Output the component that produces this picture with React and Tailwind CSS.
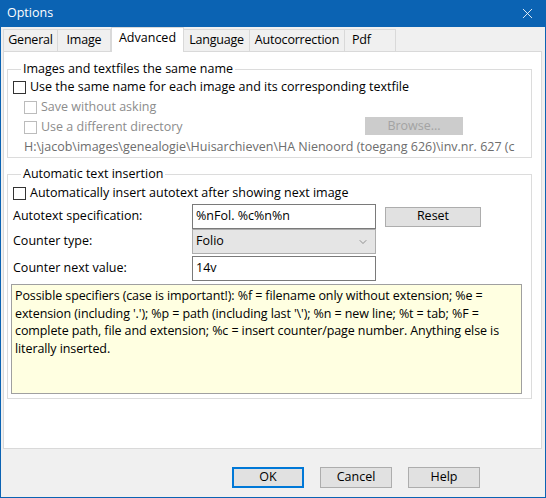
import React from 'react';
import { X, ChevronDown } from 'lucide-react';

const font = { fontFamily: '"Open Sans", "Noto Sans", "Liberation Sans", sans-serif' };

// Small win32-style checkbox
const Check = ({ label, disabled }) => (
  <div className="flex items-center h-[20px]">
    <span
      className={`w-[13px] h-[13px] border bg-white ${disabled ? 'border-[#bcbcbc]' : 'border-[#333333]'}`}
    />
    <span className={`ml-[4px] ${disabled ? 'text-[#8c8c8c]' : 'text-black'}`}>{label}</span>
  </div>
);

const tabs = [
  { name: 'General', w: 'w-[55px]' },
  { name: 'Image', w: 'w-[54px]' },
  { name: 'Advanced', w: 'w-[73px]', active: true },
  { name: 'Language', w: 'w-[67px]' },
  { name: 'Autocorrection', w: 'w-[96px]' },
  { name: 'Pdf', w: 'w-[52px]', left: true },
];

const Btn = ({ children, primary }) => (
  <button
    className={`w-[72px] h-[21px] bg-[#e1e1e1] text-black leading-none ${
      primary ? 'border-2 border-[#0078d7]' : 'border border-[#adadad]'
    }`}
  >
    {children}
  </button>
);

const helpLines = [
  'Possible specifiers (case is important!): %f = filename only without extension; %e =',
  "extension (including '.'); %p = path (including last '\\'); %n = new line; %t = tab; %F =",
  'complete path, file and extension; %c = insert counter/page number. Anything else is',
  'literally inserted.',
];

export default function App() {
  return (
    <div
      className="w-[546px] h-[498px] bg-[#0b63b3] px-[1px] pb-[1px] flex flex-col text-[12.5px] overflow-hidden"
      style={font}
    >
      {/* Title bar */}
      <div className="h-[27px] flex items-center justify-between pl-[6px] pr-[9px] text-white shrink-0">
        <span>Options</span>
        <X size={17} strokeWidth={1.2} />
      </div>

      {/* Body */}
      <div className="flex-1 bg-[#f0f0f0] flex flex-col">
        {/* Tabs */}
        <div className="flex items-end h-[24px] pl-[2px]">
          {tabs.map((t) =>
            t.active ? (
              <div
                key={t.name}
                className={`${t.w} h-[25px] -mb-[1px] bg-white border border-b-0 border-[#d9d9d9] flex items-center justify-center relative z-10 text-black`}
              >
                <span className="-mt-[3px]">{t.name}</span>
              </div>
            ) : (
              <div
                key={t.name}
                className={`${t.w} h-[22px] bg-[#f0f0f0] border border-[#d9d9d9] border-b-0 -ml-[1px] first:ml-0 flex items-center ${
                  t.left ? 'pl-[7px]' : 'justify-center'
                } text-black whitespace-nowrap tracking-[-0.2px]`}
              >
                {t.name}
              </div>
            )
          )}
        </div>

        {/* Tab panel */}
        <div className="h-[398px] mx-[2px] mr-[3px] bg-white border border-[#d9d9d9] pt-[9px] pl-[3px] pr-[9px] flex flex-col">
          <fieldset className="border border-[#dcdcdc] h-[97px] px-[5px]">
            <legend className="ml-[8px] px-[2px] text-black leading-[16px]">Images and textfiles the same name</legend>
            <Check label="Use the same name for each image and its corresponding textfile" />
            <div className="pl-[11px]">
              <Check label="Save without asking" disabled />
              <div className="flex items-center justify-between h-[20px] pr-[63px]">
                <Check label="Use a different directory" disabled />
                <div className="w-[98px] h-[18px] mb-[2px] bg-[#cccccc] text-[#a3a3a3] flex items-center justify-center">
                  Browse...
                </div>
              </div>
              <div className="text-[#6d6d6d] whitespace-nowrap overflow-hidden w-[498px] h-[20px] leading-[20px]">
                H:\jacob\images\genealogie\Huisarchieven\HA Nienoord (toegang 626)\inv.nr. 627 (c
              </div>
            </div>
          </fieldset>

          <fieldset className="border border-[#dcdcdc] h-[233px] mt-[8px] px-[5px]">
            <legend className="ml-[8px] px-[2px] text-black leading-[16px]">Automatic text insertion</legend>
            <div className="mt-[1px]">
              <Check label="Automatically insert autotext after showing next image" />
            </div>

            <div className="flex items-center mt-[1px] h-[25px]">
              <span className="w-[179px] text-black">Autotext specification:</span>
              <div className="w-[184px] h-[25px] border border-[#7a7a7a] bg-white flex items-center pl-[3px] text-black">
                %nFol. %c%n%n
              </div>
              <div className="ml-[9px] w-[96px] h-[20px] bg-[#e1e1e1] border border-[#adadad] flex items-center justify-center text-black">
                Reset
              </div>
            </div>

            <div className="flex items-center h-[25px]">
              <span className="w-[179px] text-black">Counter type:</span>
              <div className="w-[184px] h-[25px] border border-[#adadad] bg-[#e5e5e5] flex items-center justify-between pl-[3px] pr-[6px] text-black">
                <span>Folio</span>
                <ChevronDown size={12} strokeWidth={1.2} className="text-[#555555]" />
              </div>
            </div>

            <div className="flex items-center h-[25px] mt-[2px]">
              <span className="w-[179px] text-black">Counter next value:</span>
              <div className="w-[184px] h-[25px] border border-[#7a7a7a] bg-white flex items-center pl-[3px] text-black">
                14v
              </div>
            </div>

            <div className="mt-[3px] w-[511px] h-[110px] -ml-[2px] bg-[#ffffe1] border border-[#a0a0a0] px-[3px] pt-[2px] text-black leading-[17.5px] tracking-[-0.1px]">
              {helpLines.map((l) => (
                <div key={l} className="whitespace-nowrap">{l}</div>
              ))}
            </div>
          </fieldset>
        </div>

        {/* Dialog buttons */}
        <div className="flex-1 flex items-start justify-end pt-[18px] pr-[65px] gap-[16px]">
          <Btn primary>OK</Btn>
          <Btn>Cancel</Btn>
          <Btn>Help</Btn>
        </div>
      </div>
    </div>
  );
}
